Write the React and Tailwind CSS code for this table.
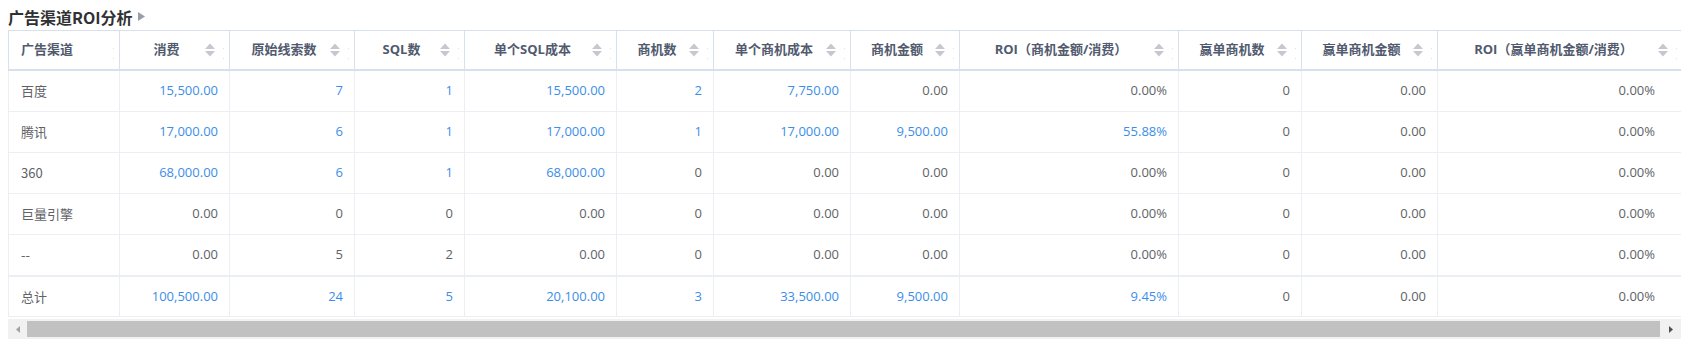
import React from "react";

const columns = [
  { title: "广告渠道", width: 111, first: true },
  { title: "消费", width: 110 },
  { title: "原始线索数", width: 125 },
  { title: "SQL数", width: 110 },
  { title: "单个SQL成本", width: 152 },
  { title: "商机数", width: 97 },
  { title: "单个商机成本", width: 137 },
  { title: "商机金额", width: 109 },
  { title: "ROI（商机金额/消费）", width: 219 },
  { title: "赢单商机数", width: 123 },
  { title: "赢单商机金额", width: 136 },
  { title: "ROI（赢单商机金额/消费）", width: 248, last: true },
];

// [value, isLink]
const rows = [
  ["百度", ["15,500.00", 1], ["7", 1], ["1", 1], ["15,500.00", 1], ["2", 1], ["7,750.00", 1], ["0.00"], ["0.00%"], ["0"], ["0.00"], ["0.00%"]],
  ["腾讯", ["17,000.00", 1], ["6", 1], ["1", 1], ["17,000.00", 1], ["1", 1], ["17,000.00", 1], ["9,500.00", 1], ["55.88%", 1], ["0"], ["0.00"], ["0.00%"]],
  ["360", ["68,000.00", 1], ["6", 1], ["1", 1], ["68,000.00", 1], ["0"], ["0.00"], ["0.00"], ["0.00%"], ["0"], ["0.00"], ["0.00%"]],
  ["巨量引擎", ["0.00"], ["0"], ["0"], ["0.00"], ["0"], ["0.00"], ["0.00"], ["0.00%"], ["0"], ["0.00"], ["0.00%"]],
  ["--", ["0.00"], ["5"], ["2"], ["0.00"], ["0"], ["0.00"], ["0.00"], ["0.00%"], ["0"], ["0.00"], ["0.00%"]],
  ["总计", ["100,500.00", 1], ["24", 1], ["5", 1], ["20,100.00", 1], ["3", 1], ["33,500.00", 1], ["9,500.00", 1], ["9.45%", 1], ["0"], ["0.00"], ["0.00%"]],
];

function SortIcon({ last }) {
  return (
    <svg
      width="12"
      height="14"
      viewBox="0 0 12 14"
      className={`absolute top-1/2 -translate-y-1/2 ${last ? "right-[16px]" : "right-[13px]"}`}
    >
      <polygon points="1,6 6,0.5 11,6" fill="#c5c8cf" />
      <polygon points="1,8 6,13.5 11,8" fill="#c5c8cf" />
    </svg>
  );
}

function HeaderCell({ col }) {
  return (
    <div
      className="relative h-full shrink-0 border-r border-[#d8e0ec] flex items-center"
      style={{ width: col.width }}
    >
      {col.first ? (
        <span className="pl-[12px]">{col.title}</span>
      ) : (
        <>
          <span className="w-full pl-[10px] pr-[26px] text-center whitespace-nowrap">{col.title}</span>
          <SortIcon last={col.last} />
        </>
      )}
      {/* resize handle dots */}
      <span className={`absolute top-[17px] w-px h-px bg-[#e2e2e2] ${col.last ? "right-[8px]" : "right-[5px]"}`} />
      <span className={`absolute top-[27px] w-px h-px bg-[#e2e2e2] ${col.last ? "right-[8px]" : "right-[5px]"}`} />
    </div>
  );
}

export default function App() {
  return (
    <div className="w-[1688px] h-[350px] bg-white font-['Open_Sans','Noto_Sans_CJK_SC',sans-serif] overflow-hidden">
      <div className="h-[30px] pt-[3px] pl-2 flex items-center gap-[5px]">
        <span className="text-[16px] font-bold text-[#303133] font-['Noto_Sans_CJK_SC',sans-serif]">广告渠道ROI分析</span>
        <svg width="7" height="9" viewBox="0 0 7 9">
          <polygon points="0,0 7,4.5 0,9" fill="#9a9ea6" />
        </svg>
      </div>

      <div className="ml-2 w-[1673px] overflow-hidden">
        <div className="w-[1678px]">
          {/* header */}
          <div className="flex h-[41px] border-t border-b-2 border-l border-[#d8e0ec] text-[13px] font-bold text-[#515a6e]">
            {columns.map((col) => (
              <HeaderCell key={col.title} col={col} />
            ))}
          </div>

          {/* body */}
          {rows.map((row, ri) => (
            <div
              key={ri}
              className={`flex h-[41px] border-b border-l border-[#ebeef2] text-[13px] ${ri === rows.length - 1 ? "border-t border-t-[#ebeef2]" : ""}`}
            >
              <div
                className="shrink-0 border-r border-[#ebeef2] flex items-center pl-[12px] text-[#606266] font-['Noto_Sans_CJK_SC',sans-serif]"
                style={{ width: columns[0].width }}
              >
                {row[0]}
              </div>
              {row.slice(1).map(([v, link], ci) => (
                <div
                  key={ci}
                  className={`shrink-0 border-r border-[#ebeef2] flex items-center justify-end ${columns[ci + 1].last ? "pr-[30px]" : "pr-[11px]"} ${link ? "text-[#3b8ee8]" : "text-[#606266]"}`}
                  style={{ width: columns[ci + 1].width }}
                >
                  {v}
                </div>
              ))}
            </div>
          ))}
        </div>

        {/* horizontal scrollbar */}
        <div className="mt-[2px] h-[20px] bg-[#f1f1f1] flex items-center">
          <div className="w-[19px] h-full flex items-center justify-center">
            <svg width="4" height="7" viewBox="0 0 4 7">
              <polygon points="4,0 0,3.5 4,7" fill="#a3a3a3" />
            </svg>
          </div>
          <div className="flex-1 h-[16px] bg-[#c1c1c1]" />
          <div className="w-[21px] h-full flex items-center justify-center">
            <svg width="4" height="7" viewBox="0 0 4 7">
              <polygon points="0,0 4,3.5 0,7" fill="#505050" />
            </svg>
          </div>
        </div>
      </div>
    </div>
  );
}
